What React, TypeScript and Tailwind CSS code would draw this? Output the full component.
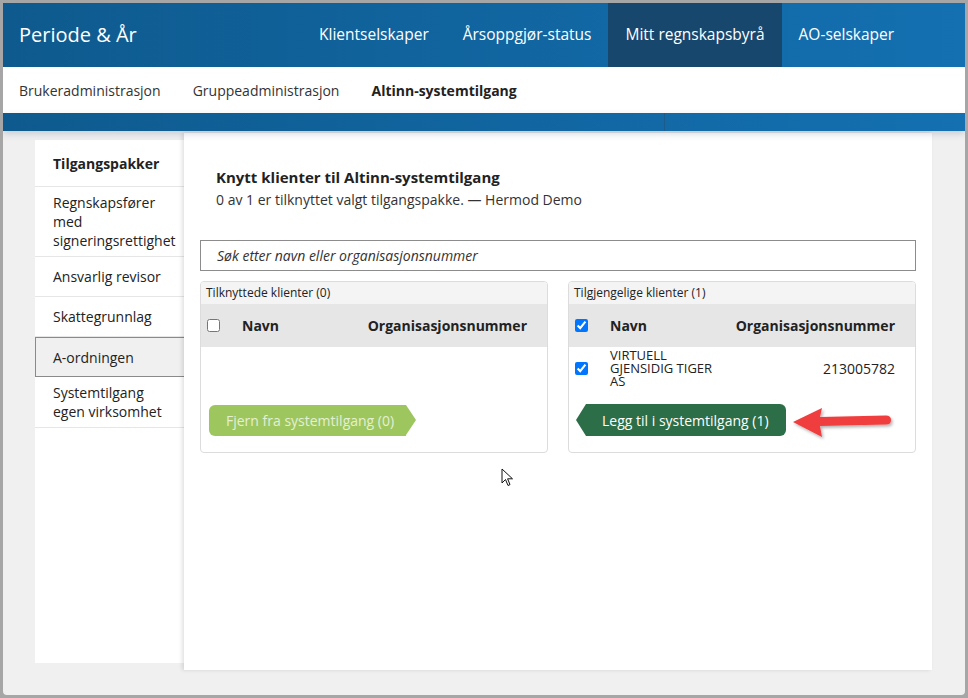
import React from 'react';

const NAV = [
  { label: 'Klientselskaper', active: false },
  { label: 'Årsoppgjør-status', active: false },
  { label: 'Mitt regnskapsbyrå', active: true },
  { label: 'AO-selskaper', active: false },
];

const SUBNAV = [
  { label: 'Brukeradministrasjon', active: false },
  { label: 'Gruppeadministrasjon', active: false },
  { label: 'Altinn-systemtilgang', active: true },
];

const PACKAGES = [
  { label: 'Regnskapsfører med signeringsrettighet', active: false },
  { label: 'Ansvarlig revisor', active: false },
  { label: 'Skattegrunnlag', active: false },
  { label: 'A-ordningen', active: true },
  { label: 'Systemtilgang egen virksomhet', active: false },
];

const TableHead = ({ checked }: { checked: boolean }) => (
  <div className="grid h-[43px] grid-cols-[35px_1fr_auto] items-center bg-[#e6e6e6] pl-[6px] pr-[20px] text-[14px] font-bold text-[#222]">
    <input type="checkbox" readOnly checked={checked} className="h-[13px] w-[13px]" />
    <span>Navn</span>
    <span>Organisasjonsnummer</span>
  </div>
);

const RedArrow = () => (
  <svg width="104" height="36" viewBox="0 0 104 36" className="-mb-[6px] ml-[5px] mt-[2px]">
    <defs>
      <filter id="sh" x="-10%" y="-20%" width="130%" height="160%">
        <feDropShadow dx="1.5" dy="2" stdDeviation="1.5" floodColor="#000" floodOpacity="0.3" />
      </filter>
    </defs>
    <path
      d="M2 16 L31 2 L29 11 L95 9.5 Q100 9.5 100 14 Q100 18.5 95 18.5 L29 20 L31 31 Z"
      fill="#f03e3e"
      filter="url(#sh)"
    />
  </svg>
);

export default function App() {
  return (
    <div className="h-[698px] w-[968px] bg-[#a6a6a6] p-[3px] font-['Open_Sans',sans-serif] text-[#222]">
      <div className="flex h-full flex-col overflow-hidden rounded-b-[4px] bg-[#f0f0f0]">
        {/* top bar */}
        <header className="flex h-[64px] shrink-0 items-stretch bg-linear-to-r from-[#0e5a8e] to-[#1470b1] text-white">
          <div className="flex w-[299px] items-center pl-4 text-[20px] font-medium">Periode &amp; År</div>
          <nav className="flex items-stretch text-[15.5px] font-medium">
            {NAV.map((n) => (
              <div
                key={n.label}
                className={n.active ? 'flex items-center bg-[#17476d] px-[17px]' : 'flex items-center px-[17px]'}
              >
                {n.label}
              </div>
            ))}
          </nav>
        </header>

        {/* sub nav */}
        <div className="flex h-[46px] shrink-0 items-center gap-8 bg-white pl-4 text-[14px] text-[#333]">
          {SUBNAV.map((s) => (
            <span key={s.label} className={s.active ? 'font-bold text-[#222]' : ''}>
              {s.label}
            </span>
          ))}
        </div>

        <div className="relative z-10 flex h-[18px] shrink-0 bg-linear-to-r from-[#0e5a8e] to-[#1470b1] shadow-[0_3px_7px_rgba(40,70,100,0.2)]">
          <div className="w-[661px]" />
          <div className="flex-1 border-l border-[#1a5c8c]" />
        </div>

        {/* content */}
        <div className="flex flex-1 items-start pl-[32px]">
          <aside className="mt-[9px] h-[523px] w-[149px] shrink-0 bg-white text-[14px] text-[#222]">
            <div className="flex h-[47px] items-center border-b border-[#e6e6e6] pl-[18px] font-bold">Tilgangspakker</div>
            {PACKAGES.map((p) => (
              <div
                key={p.label}
                className={
                  p.active
                    ? 'flex min-h-[40px] items-center border-y border-l border-[#8a8a8a] bg-[#f0f0f0] py-[6px] pl-[17px] pr-[8px] leading-[19px]'
                    : 'flex min-h-[40px] items-center border-b border-[#e6e6e6] py-[6px] pl-[18px] pr-[8px] leading-[19px]'
                }
              >
                {p.label}
              </div>
            ))}
          </aside>

          <main className="relative mt-[2px] h-[537px] w-[748px] shrink-0 bg-white px-4 shadow-[-2px_0_4px_rgba(0,0,0,0.12)]">
            <div className="pl-4 pt-[34px]">
              <h1 className="text-[15px] font-bold leading-[20px] text-[#222]">Knytt klienter til Altinn-systemtilgang</h1>
              <p className="mt-[3px] text-[14px] leading-[20px] text-[#333]">0 av 1 er tilknyttet valgt tilgangspakke. — Hermod Demo</p>
            </div>

            <div className="mt-[30px] flex h-[31px] items-center border border-[#8c8c8c] pl-4 text-[14px] italic text-[#333]">
              Søk etter navn eller organisasjonsnummer
            </div>

            <div className="mt-[10px] grid grid-cols-2 gap-5">
              {/* attached */}
              <section className="flex h-[172px] flex-col overflow-hidden rounded-[4px] border border-[#dcdcdc]">
                <div className="flex h-[22px] items-center bg-[#f4f4f4] pl-[5px] text-[12px] text-[#222]">Tilknyttede klienter (0)</div>
                <TableHead checked={false} />
                <div className="mt-auto flex pb-[16px] pl-[8px]">
                  <div className="flex h-[31px] items-center rounded-l-[6px] bg-[#9dc65f] pl-[17px] pr-[12px] text-[14px] text-[#e4f0d4]">
                    Fjern fra systemtilgang (0)
                  </div>
                  <div className="h-0 w-0 border-y-[15.5px] border-l-[10px] border-y-transparent border-l-[#9dc65f]" />
                </div>
              </section>

              {/* available */}
              <section className="flex h-[172px] flex-col overflow-hidden rounded-[4px] border border-[#dcdcdc]">
                <div className="flex h-[22px] items-center bg-[#f4f4f4] pl-[5px] text-[12px] text-[#222]">Tilgjengelige klienter (1)</div>
                <TableHead checked={true} />
                <div className="grid h-[42px] grid-cols-[35px_1fr_auto] items-center pl-[6px] pr-[20px] text-[#222]">
                  <input type="checkbox" readOnly checked className="h-[13px] w-[13px]" />
                  <span className="w-[118px] text-[13px] leading-[13px]">VIRTUELL GJENSIDIG TIGER AS</span>
                  <span className="text-[14px]">213005782</span>
                </div>
                <div className="mt-auto flex items-start pb-[16px] pl-[7px]">
                  <div className="h-0 w-0 border-y-[16px] border-r-[10px] border-y-transparent border-r-[#2c6e48]" />
                  <div className="flex h-[32px] items-center rounded-r-[6px] bg-[#2c6e48] pl-[16px] pr-[17px] text-[14px] text-white">
                    Legg til i systemtilgang (1)
                  </div>
                  <RedArrow />
                </div>
              </section>
            </div>

            {/* mouse pointer */}
            <svg width="13" height="20" viewBox="0 0 13 20" className="absolute left-[317px] top-[335px]">
              <path d="M1 1 L1 15 L4.5 11.5 L7 17.5 L9 16.6 L6.6 10.8 L11.5 10.8 Z" fill="#fff" stroke="#111" strokeWidth="1" strokeLinejoin="round" />
            </svg>
          </main>
        </div>
      </div>
    </div>
  );
}
